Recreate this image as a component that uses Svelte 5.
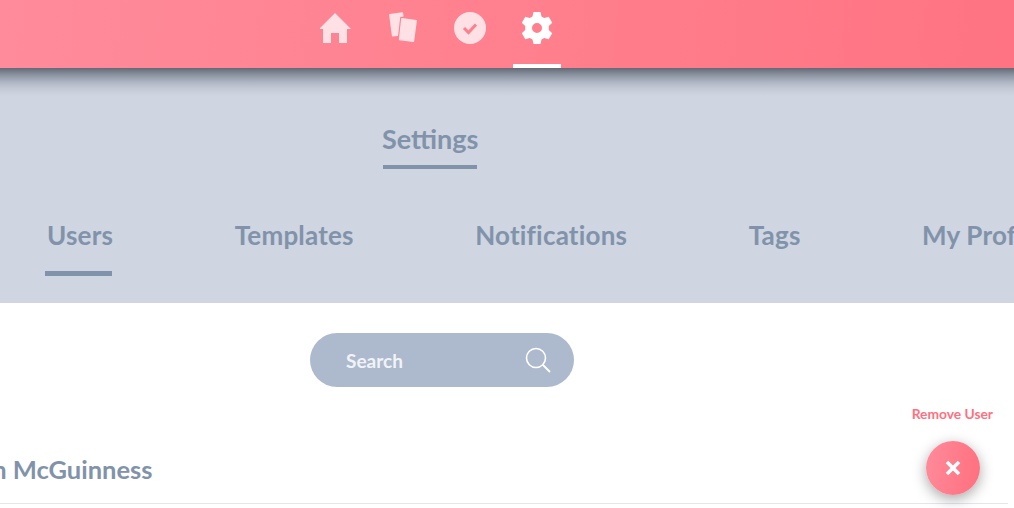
<script lang="ts">
	const navItems = ['home', 'cards', 'check', 'gear'];
	const activeNav = 'gear';
	const tabs = ['Users', 'Templates', 'Notifications', 'Tags', 'My Profile'];
	const activeTab = 'Users';
</script>

<div class="page">
	<header class="topbar">
		<nav class="nav">
			{#each navItems as item}
				<div class="nav-item" class:active={item === activeNav}>
					{#if item === 'home'}
						<svg width="32" height="32" viewBox="1 0 32 32">
							<path d="M16 1 L32 17 L28 17 L28 31 L20 31 L20 21 L12 21 L12 31 L4 31 L4 17 L0 17 Z" fill="#ffe1e5" />
						</svg>
					{:else if item === 'cards'}
						<svg width="32" height="32" viewBox="0 0 32 32">
							<g fill="#ffe1e5" stroke="#ffe1e5" stroke-width="1.4" stroke-linejoin="round">
								<path d="M2.8 2.6 L15.4 1 L15.8 4 L12.6 4.4 L10.4 23.4 L5.6 23.8 Z" />
								<path d="M14.8 6.8 L29.2 8.6 L26.4 29.4 L12.6 27.6 Z" />
							</g>
						</svg>
					{:else if item === 'check'}
						<svg width="32" height="32" viewBox="0 0 32 32">
							<circle cx="16" cy="16" r="16" fill="#ffe1e5" />
							<path d="M10 16 L14.5 20.5 L22 12.5" fill="none" stroke="#ff7f8d" stroke-width="3" />
						</svg>
					{:else}
						<svg width="32" height="32" viewBox="0 0 32 32">
							<path fill="#fff" fill-rule="evenodd" d="M12.5 0 H19.5 L20.5 4.6 L23.2 6.1 L27.7 4.7 L31.2 10.8 L27.8 14 V17.9 L31.2 21.2 L27.7 27.3 L23.2 25.9 L20.5 27.4 L19.5 32 H12.5 L11.5 27.4 L8.8 25.9 L4.3 27.3 L0.8 21.2 L4.2 18 V14 L0.8 10.8 L4.3 4.7 L8.8 6.1 L11.5 4.6 Z M16 11 A5 5 0 1 0 16 21 A5 5 0 1 0 16 11 Z" />
						</svg>
					{/if}
				</div>
			{/each}
		</nav>
	</header>

	<section class="settings">
		<div class="title-row">
			<h1 class="title">Settings</h1>
		</div>
		<div class="tabs">
			{#each tabs as tab}
				<div class="tab" class:active={tab === activeTab}>{tab}</div>
			{/each}
		</div>
	</section>

	<main class="content">
		<div class="search">
			<span>Search</span>
			<svg width="26" height="26" viewBox="0 0 26 26" fill="none" stroke="#fff">
				<circle cx="11" cy="11" r="9.5" stroke-width="1.6" />
				<path d="M18 18 L25 25" stroke-width="1.8" />
			</svg>
		</div>
		<div class="remove-label">Remove User</div>
		<div class="user-row">
			<span class="user-name">Ian McGuinness</span>
			<button class="fab" aria-label="Remove User">
				<svg width="18" height="18" viewBox="0 0 18 18">
					<path d="M3 3 L15 15 M15 3 L3 15" stroke="#fff" stroke-width="3.6" />
				</svg>
			</button>
		</div>
	</main>
</div>

<style>
	:global(body) {
		margin: 0;
		overflow: hidden;
		background: #fff;
	}

	.page {
		width: 1014px;
		height: 508px;
		overflow: hidden;
		font-family: 'Lato', 'Liberation Sans', sans-serif;
		font-weight: 700;
	}

	.topbar {
		height: 68px;
		background: linear-gradient(97deg, #ff8b9b 0%, #ff7f8d 55%, #ff7382 100%);
	}

	.nav {
		display: flex;
		gap: 19px;
		padding-left: 312px;
	}

	.nav-item {
		box-sizing: border-box;
		display: flex;
		justify-content: center;
		width: 48px;
		height: 68px;
		padding-top: 12px;
	}

	.nav-item.active {
		border-bottom: 4px solid #fff;
	}

	/* the header's shadow falls on this section across its whole width */
	.settings {
		height: 235px;
		background: linear-gradient(#636a76 0, #8c94a1 7px, #aeb5c2 14px, #c2c8d4 20px, #cfd5e1 28px) no-repeat;
		background-color: #cfd5e1;
		color: #8193aa;
	}

	.title-row {
		display: flex;
		padding: 55px 0 0 383px;
	}

	.title {
		margin: 0;
		width: 94px;
		height: 46px;
		box-sizing: border-box;
		border-bottom: 4px solid #8193aa;
		font-size: 27px;
		line-height: 32px;
		font-weight: 700;
		text-indent: -1px;
		white-space: nowrap;
	}

	.tabs {
		display: flex;
		gap: 121.5px;
		padding: 49px 0 0 47px;
		white-space: nowrap;
	}

	.tab {
		position: relative;
		height: 58px;
		font-size: 26px;
		line-height: 34px;
		letter-spacing: 0.2px;
	}

	.tab.active::after {
		content: '';
		position: absolute;
		left: -2px;
		right: 1px;
		bottom: 0;
		height: 5px;
		background: #8193aa;
	}

	.content {
		background: #fff;
	}

	.search {
		box-sizing: border-box;
		display: flex;
		align-items: center;
		justify-content: space-between;
		width: 264px;
		height: 54px;
		margin: 30px 0 0 310px;
		padding: 0 23px 0 36px;
		border-radius: 27px;
		background: #adbacd;
		color: #f1f3f7;
		font-size: 19px;
	}

	.remove-label {
		margin: 18px 21px 0 0;
		text-align: right;
		font-size: 13.8px;
		line-height: 17px;
		color: #ff7080;
	}

	.user-row {
		box-sizing: border-box;
		position: relative;
		display: flex;
		align-items: center;
		width: 1008px;
		height: 82px;
		padding-top: 12px;
		border-bottom: 1px solid #e3e6ec;
	}

	.user-name {
		margin-left: -28px;
		font-size: 25.5px;
		color: #8193aa;
		white-space: nowrap;
	}

	.fab {
		position: absolute;
		right: 28px;
		top: 19px;
		display: flex;
		align-items: center;
		justify-content: center;
		width: 54px;
		height: 54px;
		padding: 0;
		border: 0;
		border-radius: 50%;
		background: linear-gradient(100deg, #ff8b9b 0%, #ff6f7e 100%);
		box-shadow: 0 4px 14px rgba(0, 0, 0, 0.35);
	}
</style>
